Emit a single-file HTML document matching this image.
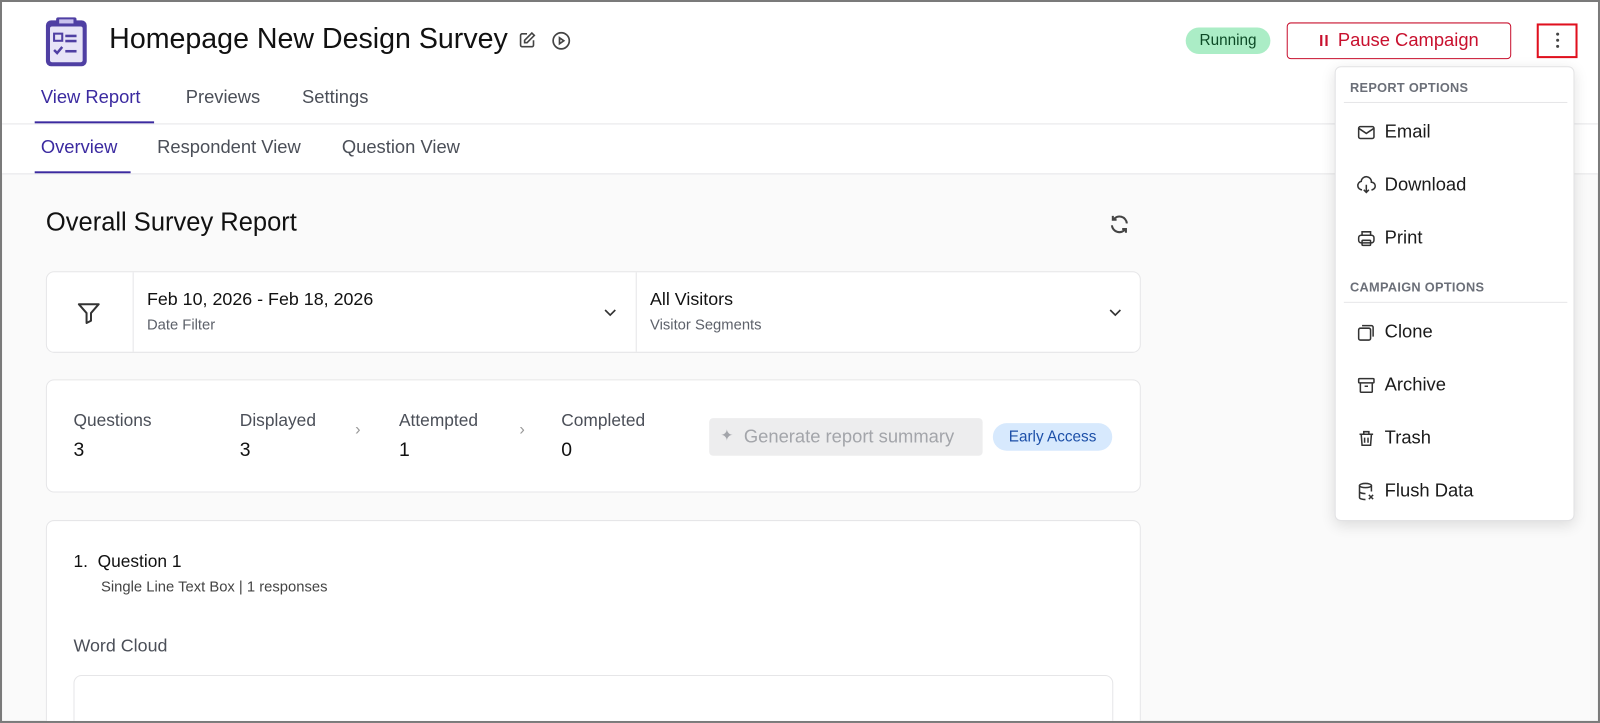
<!DOCTYPE html>
<html><head><meta charset="utf-8"><style>
*{box-sizing:border-box;margin:0;padding:0}
html,body{width:1600px;height:723px;overflow:hidden}
body{font-family:"Liberation Sans",sans-serif;background:#fff;position:relative;color:#111}
.frame{position:absolute;left:0;top:0;width:1568px;height:709px;border:2px solid #7a7a7a;overflow:hidden;background:#fafafa;transform:scale(1.0204,1.0197);transform-origin:0 0}
.hdr{position:absolute;left:0;top:0;width:100%;height:168px;background:#fff}
.abs{position:absolute}
.tab{position:absolute;font-size:18px;color:#4b4f58}
.card{position:absolute;background:#fff;border:1px solid #e6e6e8;border-radius:8px}
.lbl{font-size:17px;color:#4b4f58}
.num{font-size:19px;color:#111}
.menu{position:absolute;left:1306px;top:63px;width:235px;height:446px;background:#fff;border:1px solid #e2e2e4;border-radius:6px;box-shadow:0 4px 14px rgba(0,0,0,.12)}
.sec{position:absolute;left:14px;font-size:12.5px;font-weight:bold;color:#6b6f78;letter-spacing:.3px}
.sep{position:absolute;left:8px;right:6px;height:1px;background:#e6e6e8}
.it{position:absolute;left:19px;font-size:18px;color:#1a1a1a;display:flex;align-items:center}
.it svg{margin-right:7px}
</style></head><body>
<div class="frame">
<div class="hdr">
 <svg class="abs" style="left:40px;top:13px" width="46" height="52" viewBox="0 0 46 52"><rect x="3" y="5" width="40" height="45" rx="5" fill="#4f3fa3"/><rect x="7" y="11" width="32" height="35" rx="2" fill="#e7e4f7"/><rect x="13" y="2" width="20" height="8" rx="2" fill="#4f3fa3"/><rect x="16" y="4" width="14" height="4" fill="#c9c2ee"/><rect x="11" y="18" width="8" height="7" fill="none" stroke="#4f3fa3" stroke-width="2"/><rect x="22" y="19" width="11" height="2.5" fill="#4f3fa3"/><rect x="22" y="24" width="11" height="2.5" fill="#4f3fa3"/><path d="M11 34l3 3 5-6" fill="none" stroke="#4f3fa3" stroke-width="2.4"/><rect x="22" y="34" width="11" height="2.5" fill="#4f3fa3"/></svg>
 <div class="abs" style="left:105px;top:20px;font-size:28px;color:#111">Homepage New Design Survey</div>
 <svg class="abs" style="left:505px;top:28px" width="19" height="19" viewBox="0 0 24 24" fill="none" stroke="#444" stroke-width="2"><path d="M12 4H6a2 2 0 0 0-2 2v12a2 2 0 0 0 2 2h12a2 2 0 0 0 2-2v-6"/><path d="M18 3l3 3-9 9H9v-3z"/></svg>
 <svg class="abs" style="left:538px;top:28px" width="20" height="20" viewBox="0 0 24 24" fill="none" stroke="#444" stroke-width="2"><circle cx="12" cy="12" r="9.5"/><path d="M10 8.5l5 3.5-5 3.5z"/></svg>
 <div class="abs" style="left:1160px;top:25px;width:83px;height:26px;border-radius:13px;background:#abedc6;color:#0c4a26;font-size:15px;line-height:26px;text-align:center">Running</div>
 <div class="abs" style="left:1259px;top:20px;width:220px;height:36px;border:1.5px solid #c8102e;border-radius:4px;color:#c8102e;font-size:18px;line-height:33px;text-align:center"><b style="font-size:15px;letter-spacing:1px;margin-right:8px">II</b>Pause Campaign</div>
 <div class="abs" style="left:1504px;top:21px;width:40px;height:34px;border:2px solid #e0101e"><div style="position:absolute;left:17px;top:7px;width:3px;height:3px;border-radius:2px;background:#444;box-shadow:0 6px 0 #444,0 12px 0 #444"></div></div>
 <div class="tab" style="left:38px;top:83px;color:#3b2aa0">View Report</div>
 <div class="abs" style="left:32px;top:117px;width:117px;height:2px;background:#3b2aa0"></div>
 <div class="tab" style="left:180px;top:83px">Previews</div>
 <div class="tab" style="left:294px;top:83px">Settings</div>
 <div class="abs" style="left:0;top:119px;width:100%;height:1px;background:#e6e6e8"></div>
 <div class="tab" style="left:38px;top:132px;color:#3b2aa0">Overview</div>
 <div class="abs" style="left:32px;top:166px;width:94px;height:2px;background:#3b2aa0"></div>
 <div class="tab" style="left:152px;top:132px">Respondent View</div>
 <div class="tab" style="left:333px;top:132px">Question View</div>
 <div class="abs" style="left:0;top:168px;width:100%;height:1px;background:#e6e6e8"></div>
</div>
<div class="abs" style="left:43px;top:202px;font-size:25px;color:#111">Overall Survey Report</div>
<svg class="abs" style="left:1084px;top:207px" width="22" height="22" viewBox="0 0 24 24" fill="none" stroke="#444" stroke-width="2.2"><path d="M20 11a8 8 0 0 0-14.5-4M4 13a8 8 0 0 0 14.5 4"/><path d="M5 3v4h4M19 21v-4h-4"/></svg>
<div class="card" style="left:43px;top:264px;width:1073px;height:80px">
 <div class="abs" style="left:84px;top:0;width:1px;height:78px;background:#e6e6e8"></div>
 <div class="abs" style="left:577px;top:0;width:1px;height:78px;background:#e6e6e8"></div>
 <svg class="abs" style="left:27px;top:27px" width="28" height="26" viewBox="0 0 24 24" fill="none" stroke="#333" stroke-width="1.8" stroke-linejoin="round"><path d="M3 4h18l-7 8v7l-4 2v-9z"/></svg>
 <div class="abs" style="left:98px;top:16px;font-size:17.5px">Feb 10, 2026 - Feb 18, 2026</div>
 <div class="abs" style="left:98px;top:44px;font-size:14.5px;color:#5d616a">Date Filter</div>
 <svg class="abs" style="left:545px;top:32px" width="14" height="14" viewBox="0 0 14 14" fill="none" stroke="#333" stroke-width="1.6"><path d="M2 5l5 5 5-5"/></svg>
 <div class="abs" style="left:591px;top:16px;font-size:17.5px">All Visitors</div>
 <div class="abs" style="left:591px;top:44px;font-size:14.5px;color:#5d616a">Visitor Segments</div>
 <svg class="abs" style="left:1040px;top:32px" width="14" height="14" viewBox="0 0 14 14" fill="none" stroke="#333" stroke-width="1.6"><path d="M2 5l5 5 5-5"/></svg>
</div>
<div class="card" style="left:43px;top:370px;width:1073px;height:111px">
 <div class="abs lbl" style="left:26px;top:30px">Questions</div><div class="abs num" style="left:26px;top:58px">3</div>
 <div class="abs lbl" style="left:189px;top:30px">Displayed</div><div class="abs num" style="left:189px;top:58px">3</div>
 <div class="abs" style="left:302px;top:40px;color:#999;font-size:16px">›</div>
 <div class="abs lbl" style="left:345px;top:30px">Attempted</div><div class="abs num" style="left:345px;top:58px">1</div>
 <div class="abs" style="left:463px;top:40px;color:#999;font-size:16px">›</div>
 <div class="abs lbl" style="left:504px;top:30px">Completed</div><div class="abs num" style="left:504px;top:58px">0</div>
 <div class="abs" style="left:649px;top:37px;width:268px;height:37px;background:#ededee;border-radius:4px;color:#a3a5aa;font-size:18px;line-height:36px;padding-left:34px">Generate report summary<span style="position:absolute;left:11px;top:0;font-size:15px">✦</span></div>
 <div class="abs" style="left:927px;top:42px;width:117px;height:27px;background:#d7e9fd;border-radius:14px;color:#1c4fa8;font-size:15px;line-height:27px;text-align:center">Early Access</div>
</div>
<div class="card" style="left:43px;top:508px;width:1073px;height:210px">
 <div class="abs" style="left:26px;top:30px;font-size:17px">1.&nbsp; Question 1</div>
 <div class="abs" style="left:53px;top:57px;font-size:14.5px;color:#444">Single Line Text Box | 1 responses</div>
 <div class="abs" style="left:26px;top:112px;font-size:17.5px;color:#4b4f58">Word Cloud</div>
 <div class="abs" style="left:26px;top:151px;width:1019px;height:60px;border:1px solid #e6e6e8;border-radius:8px"></div>
</div>
<div class="menu">
 <div class="sec" style="top:13px">REPORT OPTIONS</div>
 <div class="sep" style="top:34px"></div>
 <div class="it" style="top:53px"><svg width="22" height="20" viewBox="0 0 24 24" fill="none" stroke="#333" stroke-width="1.8"><rect x="3" y="5" width="18" height="14" rx="2"/><path d="M3 7l9 6 9-6"/></svg>Email</div>
 <div class="it" style="top:105px"><svg width="22" height="20" viewBox="0 0 24 24" fill="none" stroke="#333" stroke-width="1.8"><path d="M7 17a5 5 0 0 1-1-9.9A6 6 0 0 1 18 8a4.5 4.5 0 0 1 0 9"/><path d="M12 11v9M9 17l3 3 3-3"/></svg>Download</div>
 <div class="it" style="top:157px"><svg width="22" height="20" viewBox="0 0 24 24" fill="none" stroke="#333" stroke-width="1.8"><path d="M7 8V4h10v4"/><rect x="3" y="8" width="18" height="9" rx="3"/><rect x="7" y="14" width="10" height="6" rx="1"/></svg>Print</div>
 <div class="sec" style="top:209px">CAMPAIGN OPTIONS</div>
 <div class="sep" style="top:230px"></div>
 <div class="it" style="top:249px"><svg width="22" height="20" viewBox="0 0 24 24" fill="none" stroke="#333" stroke-width="1.8"><rect x="3" y="7" width="14" height="14" rx="2"/><path d="M7 4h11a2 2 0 0 1 2 2v11"/></svg>Clone</div>
 <div class="it" style="top:301px"><svg width="22" height="20" viewBox="0 0 24 24" fill="none" stroke="#333" stroke-width="1.8"><rect x="3" y="4" width="18" height="5" rx="1"/><path d="M5 9v10a1 1 0 0 0 1 1h12a1 1 0 0 0 1-1V9M10 13h4"/></svg>Archive</div>
 <div class="it" style="top:353px"><svg width="22" height="20" viewBox="0 0 24 24" fill="none" stroke="#333" stroke-width="1.8"><path d="M4 7h16M9 7V4h6v3M6 7l1 13h10l1-13M10 11v6M14 11v6"/></svg>Trash</div>
 <div class="it" style="top:405px"><svg width="22" height="20" viewBox="0 0 24 24" fill="none" stroke="#333" stroke-width="1.8"><ellipse cx="11" cy="5" rx="7" ry="2.5"/><path d="M4 5v14c0 1.4 3 2.5 7 2.5M18 5v7M4 12c0 1.4 3 2.5 7 2.5M15 16l5 5M20 16l-5 5"/></svg>Flush Data</div>
</div>
</div>
</body></html>
